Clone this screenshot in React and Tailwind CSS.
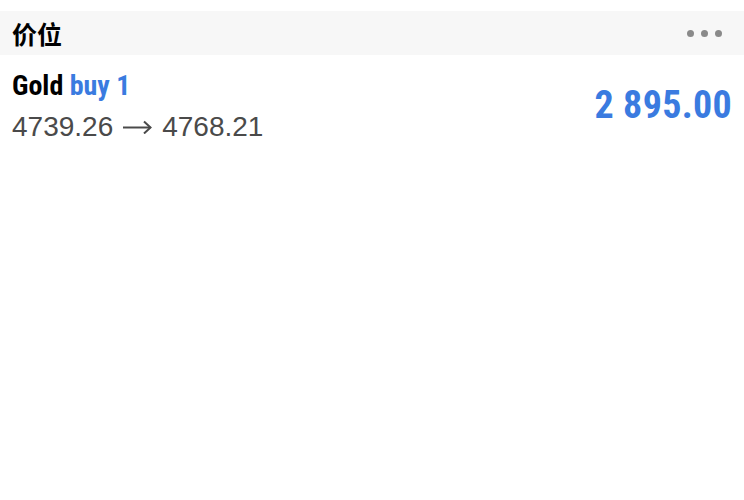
export default function App() {
  return (
    <div className="w-[744px] h-[500px] bg-white pt-[11px]">
      <div className="h-[44px] bg-[#f7f7f7] flex items-center justify-between pl-[12px] pr-[22px]">
        <span className="text-[25px] font-bold text-black leading-none" style={{ fontFamily: '"Noto Sans CJK SC", sans-serif' }}>价位</span>
        <div className="flex gap-[7px]">
          <span className="w-[7px] h-[7px] rounded-full bg-[#8a8a8a]" />
          <span className="w-[7px] h-[7px] rounded-full bg-[#8a8a8a]" />
          <span className="w-[7px] h-[7px] rounded-full bg-[#8a8a8a]" />
        </div>
      </div>
      <div className="flex items-start justify-between pl-[12px] pr-[12px] pt-[14px]">
        <div className="flex flex-col">
          <div className="text-[28px] font-bold leading-[34px] font-stretch-condensed" style={{ fontFamily: 'Roboto, sans-serif' }}>
            <span className="text-black">Gold</span> <span className="text-[#3a7be0]">buy 1</span>
          </div>
          <div className="mt-[8px] flex items-center text-[28px] text-[#4a4a4a] leading-[32px]" style={{ fontFamily: '"Liberation Sans", Arial, sans-serif' }}>
            <span>4739.26</span>
            <svg className="ml-[10px] mr-[10px]" width="29" height="14" viewBox="0 0 29 14" fill="none" stroke="#4a4a4a" strokeWidth="2">
              <path d="M0 7.5 H27.5" />
              <path d="M21 1.5 L27.5 7.5 L21 13.5" />
            </svg>
            <span>4768.21</span>
          </div>
        </div>
        <div className="mt-[17px] text-[38px] font-bold text-[#3a7be0] leading-[38px] font-stretch-condensed tracking-[0.3px]" style={{ fontFamily: 'Roboto, sans-serif' }}>
          2 895.00
        </div>
      </div>
    </div>
  );
}
